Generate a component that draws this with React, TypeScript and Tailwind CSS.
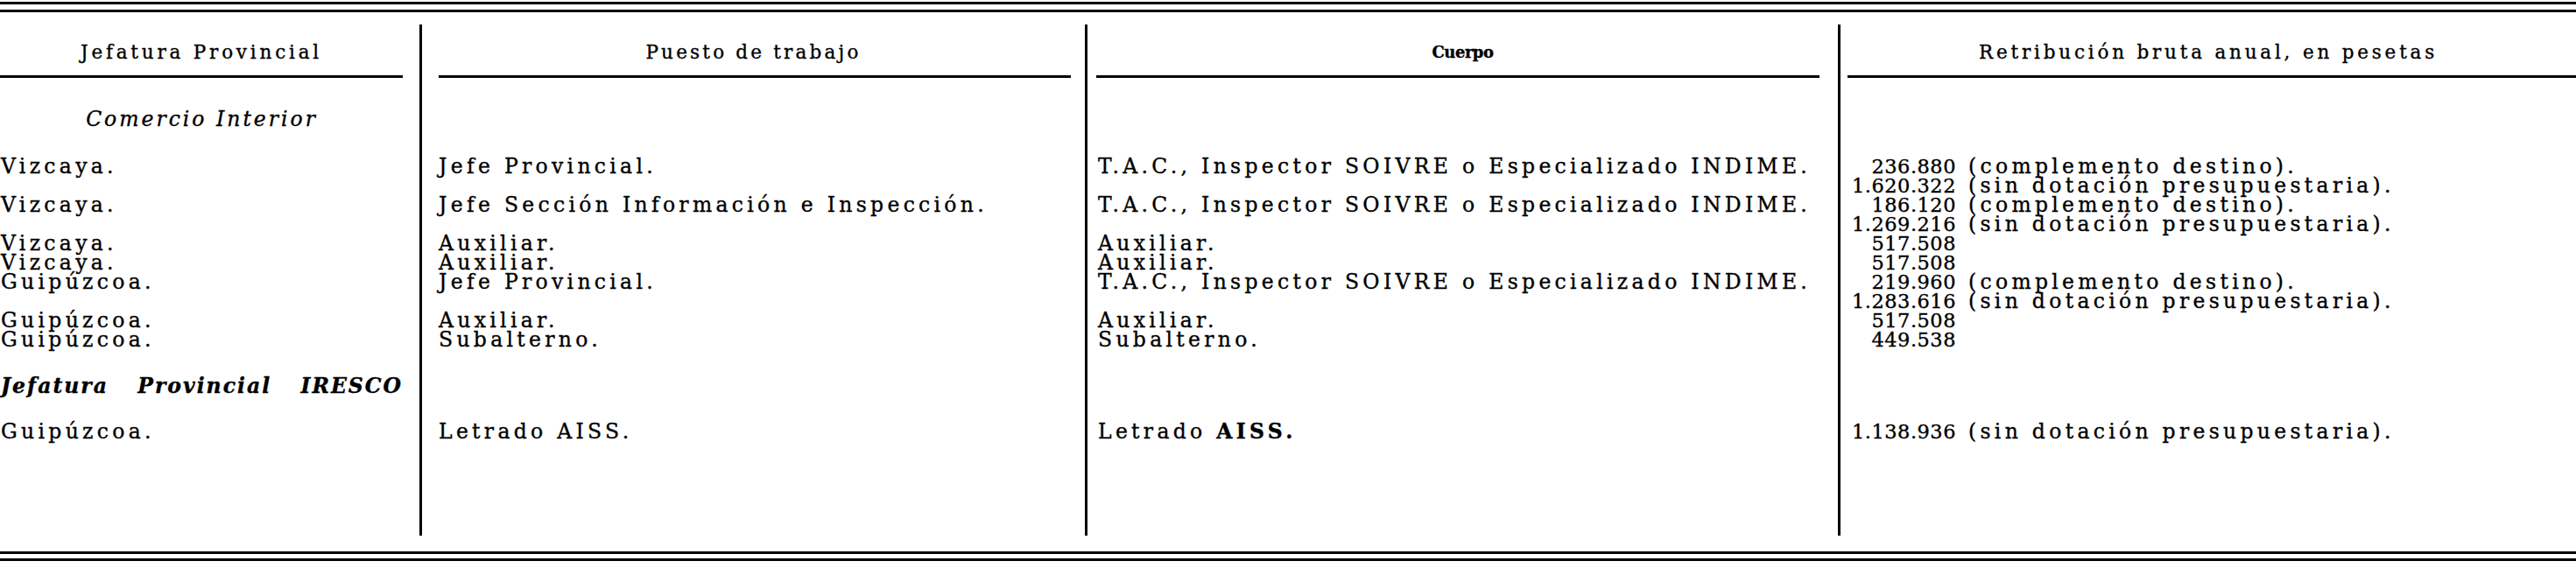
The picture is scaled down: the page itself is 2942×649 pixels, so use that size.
import type { ReactNode } from "react";

type Line = { num: string; note?: string };

type Row = {
  h: string;
  c1?: ReactNode;
  c2?: ReactNode;
  c3?: ReactNode;
  c4?: Line[];
};

const TAC = "T.A.C., Inspector SOIVRE o Especializado INDIME.";

const rows: Row[] = [
  { h: "h-[36px]" },
  {
    h: "h-[22px]",
    c1: <div className="text-center pr-[19px] italic tracking-[3px]">Comercio Interior</div>,
  },
  { h: "h-[32px]" },
  {
    h: "h-[44px]",
    c1: "Vizcaya.",
    c2: "Jefe Provincial.",
    c3: TAC,
    c4: [
      { num: "236.880", note: "(complemento destino)." },
      { num: "1.620.322", note: "(sin dotación presupuestaria)." },
    ],
  },
  {
    h: "h-[44px]",
    c1: "Vizcaya.",
    c2: "Jefe Sección Información e Inspección.",
    c3: TAC,
    c4: [
      { num: "186.120", note: "(complemento destino)." },
      { num: "1.269.216", note: "(sin dotación presupuestaria)." },
    ],
  },
  { h: "h-[22px]", c1: "Vizcaya.", c2: "Auxiliar.", c3: "Auxiliar.", c4: [{ num: "517.508" }] },
  { h: "h-[22px]", c1: "Vizcaya.", c2: "Auxiliar.", c3: "Auxiliar.", c4: [{ num: "517.508" }] },
  {
    h: "h-[44px]",
    c1: "Guipúzcoa.",
    c2: "Jefe Provincial.",
    c3: TAC,
    c4: [
      { num: "219.960", note: "(complemento destino)." },
      { num: "1.283.616", note: "(sin dotación presupuestaria)." },
    ],
  },
  { h: "h-[22px]", c1: "Guipúzcoa.", c2: "Auxiliar.", c3: "Auxiliar.", c4: [{ num: "517.508" }] },
  { h: "h-[22px]", c1: "Guipúzcoa.", c2: "Subalterno.", c3: "Subalterno.", c4: [{ num: "449.538" }] },
  { h: "h-[31px]" },
  {
    h: "h-[22px]",
    c1: (
      <div className="flex justify-between pr-[19px] italic font-bold tracking-[2px]">
        <span>Jefatura</span>
        <span>Provincial</span>
        <span>IRESCO</span>
      </div>
    ),
  },
  { h: "h-[30px]" },
  {
    h: "h-[22px]",
    c1: "Guipúzcoa.",
    c2: "Letrado AISS.",
    c3: (
      <>
        Letrado <b>AISS.</b>
      </>
    ),
    c4: [{ num: "1.138.936", note: "(sin dotación presupuestaria)." }],
  },
  { h: "h-[108px]" },
];

function Amounts({ lines }: { lines?: Line[] }) {
  if (!lines) return null;
  return (
    <>
      {lines.map((l, i) => (
        <div key={i} className="flex h-[22px]">
          <span className="w-[132px] text-right tracking-[0.5px] text-[22.5px]">{l.num}</span>
          {l.note && <span className="ml-[14px]">{l.note}</span>}
        </div>
      ))}
    </>
  );
}

function Rule({ className }: { className: string }) {
  return <div className={"bg-black " + className} />;
}

export default function App() {
  return (
    <div className="w-[2942px] h-[649px] overflow-hidden bg-white text-black font-['DejaVu_Serif',serif] text-[23.5px] leading-[22px] tracking-[4.3px] [-webkit-text-stroke:0.35px_black] pt-[2px]">
      <Rule className="h-[3px]" />
      <Rule className="h-[3px] mt-[6px]" />

      <div className="grid grid-cols-[479px_760px_860px_1fr] mt-[14px]">
        {/* header row */}
        <div className="flex flex-col pt-[21px]">
          <div className="text-center text-[21.5px] tracking-[3.8px] pr-[19px]">Jefatura Provincial</div>
          <Rule className="h-[3px] mt-[15px] mr-[19px]" />
        </div>
        <div className="flex flex-col pt-[21px] border-l-[3px] border-black">
          <div className="text-center text-[21.5px] tracking-[3.2px]">Puesto de trabajo</div>
          <Rule className="h-[3px] mt-[15px] ml-[19px] mr-[16px]" />
        </div>
        <div className="flex flex-col pt-[21px] border-l-[3px] border-black">
          <div className="text-center text-[18px] font-bold tracking-[-0.5px]">Cuerpo</div>
          <Rule className="h-[3px] mt-[15px] ml-[10px] mr-[21px]" />
        </div>
        <div className="flex flex-col pt-[21px] border-l-[3px] border-black">
          <div className="text-center text-[21.5px] tracking-[3.8px]">Retribución bruta anual, en pesetas</div>
          <Rule className="h-[3px] mt-[15px] ml-[8px]" />
        </div>

        {/* body rows */}
        {rows.map((r, i) => (
          <div key={i} className="contents">
            <div className={r.h + " pl-[1px] whitespace-nowrap"}>{r.c1}</div>
            <div className={r.h + " border-l-[3px] border-black pl-[19px] whitespace-nowrap"}>{r.c2}</div>
            <div className={r.h + " border-l-[3px] border-black pl-[12px] whitespace-nowrap"}>{r.c3}</div>
            <div className={r.h + " border-l-[3px] border-black whitespace-nowrap"}>
              <Amounts lines={r.c4} />
            </div>
          </div>
        ))}
      </div>

      <Rule className="h-[3px] mt-[18px]" />
      <Rule className="h-[3px] mt-[5px]" />
    </div>
  );
}
